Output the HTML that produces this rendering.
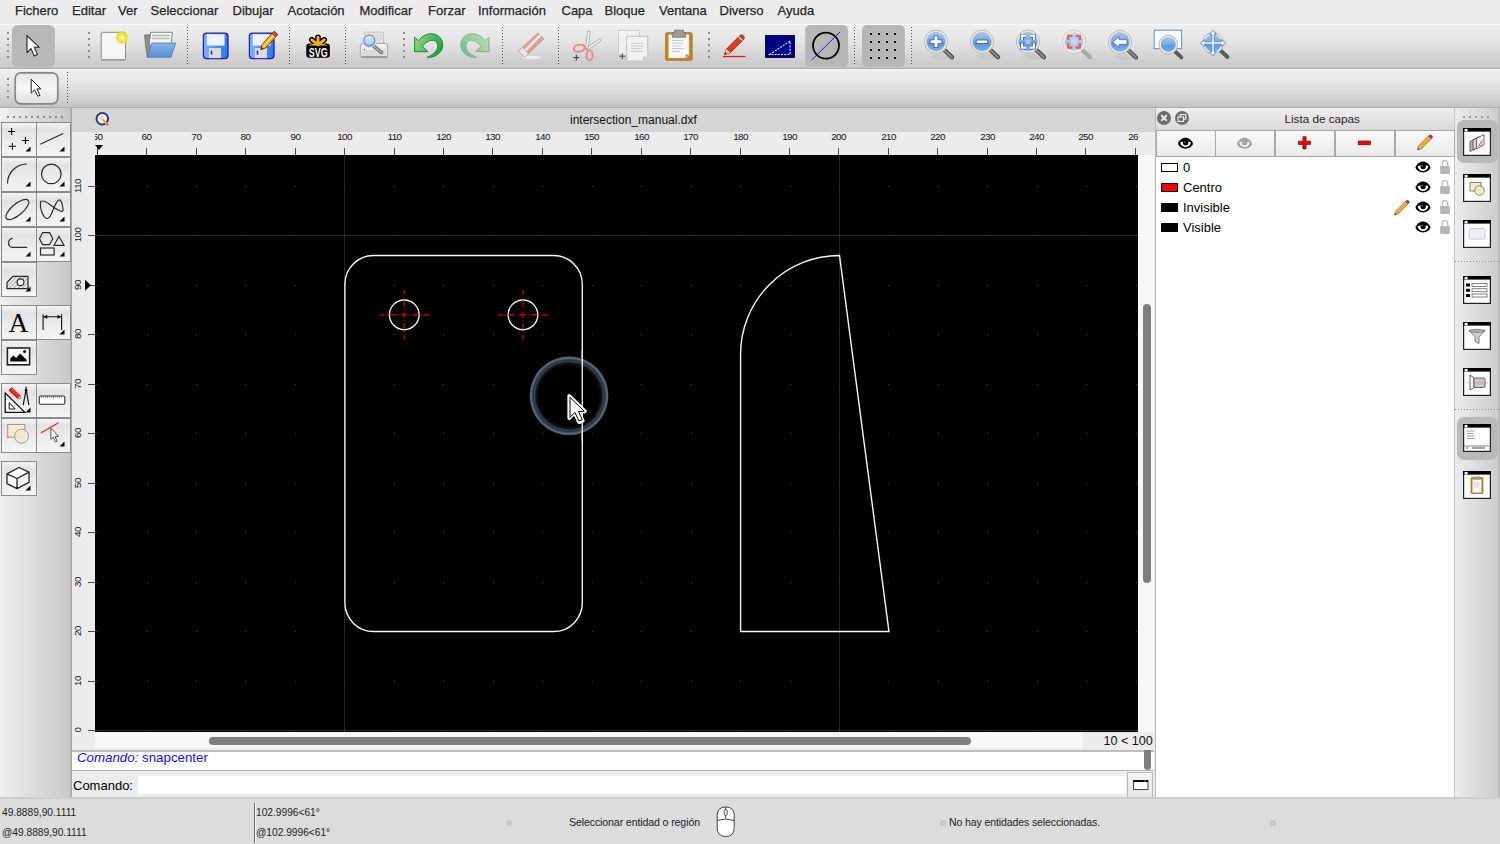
<!DOCTYPE html>
<html><head><meta charset="utf-8">
<style>
*{box-sizing:border-box}
html,body{margin:0;padding:0;width:1500px;height:844px;overflow:hidden;background:#ececec;font-family:"Liberation Sans",sans-serif;position:relative}
.a{position:absolute}
.t{position:absolute;white-space:nowrap;line-height:1}
#menu{left:0;top:0;width:1500px;height:24px;background:#ececec}
#menu .t{top:3.8px;font-size:13px;color:#262626;-webkit-text-stroke:0.25px #262626}
#tb1{left:0;top:24px;width:1500px;height:44.5px;background:linear-gradient(#eeeeee,#e6e6e6 35%,#c7c7c7);border-top:1px solid #fbfbfb;border-bottom:1px solid #a9a9a9}
#tb2{left:0;top:68.5px;width:1500px;height:39px;background:linear-gradient(#eeeeee,#e6e6e6 35%,#c5c5c5);border-top:1px solid #fbfbfb;border-bottom:1.5px solid #a9a9a9}
.grip{position:absolute;width:2px;background:repeating-linear-gradient(#8a8a8a 0 2px,transparent 2px 6px)}
.sep{position:absolute;width:1px;background:repeating-linear-gradient(#6a6a6a 0 1px,transparent 1px 3px)}
#left{left:0;top:108px;width:72px;height:690px;background:linear-gradient(90deg,#f0f0f0,#c8c8c8 97%,#9c9c9c)}
.tbtn{position:absolute;width:35.5px;height:35.3px;background:linear-gradient(#f3f3f3,#e3e3e3 22%,#efefef 70%,#f4f4f4);border:1.5px solid #8c8c8c}
#doctitle{left:72px;top:108px;width:1083px;height:24px;background:#d5d5d5}
#hruler{left:72px;top:132px;width:1083px;height:23px;background:#ececec}
#vruler{left:72px;top:155px;width:23px;height:593px;background:#ececec}
#canvas{left:95px;top:155px;width:1043px;height:577px;background:#000}
#vscroll{left:1138px;top:155px;width:16px;height:577px;background:#f8f8f8}
#hscroll{left:95px;top:732px;width:1059px;height:16px;background:#f8f8f8}
#cmdhist{left:72px;top:750px;width:1082px;height:21px;background:#fff;border-top:2px solid #bdbdbd;border-bottom:1px solid #b8b8b8}
#cmdin{left:72px;top:771px;width:1082px;height:27px;background:#ececec}
.rl{font-size:9.9px;color:#111;letter-spacing:-0.6px}
#status{left:0;top:797px;width:1500px;height:47px;background:#dcdcdc;border-top:2px solid #cdcdcd}
#status .t{font-size:10.2px;color:#222}
#layers{left:1155px;top:108px;width:300px;height:690px;background:#fff;border-left:1px solid #b8b8b8;border-right:1px solid #c4c4c4}
#dock{left:1455px;top:108px;width:45px;height:690px;background:linear-gradient(90deg,#ececec,#cdcdcd 95%,#a8a8a8)}
</style></head><body>

<div id="menu" class="a">
<span class="t" style="left:15px">Fichero</span>
<span class="t" style="left:72px">Editar</span>
<span class="t" style="left:118px">Ver</span>
<span class="t" style="left:150.5px">Seleccionar</span>
<span class="t" style="left:232.5px">Dibujar</span>
<span class="t" style="left:287.5px">Acotación</span>
<span class="t" style="left:359.5px">Modificar</span>
<span class="t" style="left:428px">Forzar</span>
<span class="t" style="left:478px">Información</span>
<span class="t" style="left:561.5px">Capa</span>
<span class="t" style="left:604.5px">Bloque</span>
<span class="t" style="left:659px">Ventana</span>
<span class="t" style="left:719.5px">Diverso</span>
<span class="t" style="left:777.5px">Ayuda</span>
</div>

<div id="tb1" class="a"></div>
<div id="tb2" class="a"></div>
<!--TB-->
<svg class="a" style="left:0;top:0" width="1500" height="108" viewBox="0 0 1500 108">
<defs>
<linearGradient id="lens" x1="0" y1="0" x2="0" y2="1"><stop offset="0" stop-color="#a9c4ea"/><stop offset="0.5" stop-color="#7aa6e0"/><stop offset="0.52" stop-color="#5e92d8"/><stop offset="1" stop-color="#79b0ec"/></linearGradient>
<linearGradient id="lensf" x1="0" y1="0" x2="0" y2="1"><stop offset="0" stop-color="#c8d8ee"/><stop offset="0.5" stop-color="#b0c8ea"/><stop offset="0.52" stop-color="#a4c0e6"/><stop offset="1" stop-color="#b8d4f2"/></linearGradient>
<linearGradient id="disk" x1="0" y1="0" x2="1" y2="0"><stop offset="0" stop-color="#7db4ff"/><stop offset="0.5" stop-color="#4f8ef2"/><stop offset="1" stop-color="#2f78f0"/></linearGradient>
<linearGradient id="undo" x1="0" y1="0" x2="1" y2="0.3"><stop offset="0" stop-color="#9ad67e"/><stop offset="1" stop-color="#2aa548"/></linearGradient>
<linearGradient id="fold" x1="0" y1="0" x2="0" y2="1"><stop offset="0" stop-color="#8ab4e4"/><stop offset="1" stop-color="#5a8fd2"/></linearGradient>
<radialGradient id="glow"><stop offset="0" stop-color="#ffffff"/><stop offset="0.3" stop-color="#f4f070"/><stop offset="0.7" stop-color="#e8e020"/><stop offset="1" stop-color="#e8e020" stop-opacity="0"/></radialGradient>
<g id="mag"><ellipse cx="6" cy="15" rx="11" ry="3" fill="#000" opacity="0.05"/><path d="M8.5,8.5L16,15.5" stroke="#4e4e4e" stroke-width="4.4" stroke-linecap="round"/><path d="M8.5,8.5L16,15.5" stroke="#8a8a8a" stroke-width="2" stroke-linecap="round"/><circle r="11.6" fill="#ecebe4" stroke="#b9b8ae" stroke-width="1"/><circle r="9.4" fill="url(#lens)" stroke="#9fb4cc" stroke-width="0.6"/></g>
<g id="magf"><path d="M8.5,8.5L16,15.5" stroke="#a8a8a8" stroke-width="4.2" stroke-linecap="round"/><circle r="11.6" fill="#efeee8" stroke="#cfcec6" stroke-width="1"/><circle r="9.4" fill="url(#lensf)"/></g>
</defs>
<path d="M8,32V58" stroke="#8c8c8c" stroke-width="2" stroke-dasharray="2 4"/>
<path d="M89,32V58" stroke="#8c8c8c" stroke-width="2" stroke-dasharray="2 4"/>
<path d="M404,32V58" stroke="#8c8c8c" stroke-width="2" stroke-dasharray="2 4"/>
<path d="M709,32V58" stroke="#8c8c8c" stroke-width="2" stroke-dasharray="2 4"/>
<path d="M187.5,27V66" stroke="#555" stroke-width="1" stroke-dasharray="1 2"/>
<path d="M289.5,27V66" stroke="#555" stroke-width="1" stroke-dasharray="1 2"/>
<path d="M345.5,27V66" stroke="#555" stroke-width="1" stroke-dasharray="1 2"/>
<path d="M502.5,27V66" stroke="#555" stroke-width="1" stroke-dasharray="1 2"/>
<path d="M558.5,27V66" stroke="#555" stroke-width="1" stroke-dasharray="1 2"/>
<path d="M854.5,27V66" stroke="#555" stroke-width="1" stroke-dasharray="1 2"/>
<path d="M911.5,27V66" stroke="#555" stroke-width="1" stroke-dasharray="1 2"/>
<rect x="12" y="25" width="43" height="42.5" rx="6" fill="#b8b8b8"/>
<path d="M27,35.6V52.6L31,48.6L34.3,56L37.5,54.6L34.3,47.3H39.3Z" fill="#fff" stroke="#222" stroke-width="1.1" stroke-linejoin="round"/>
<rect x="101.2" y="32.3" width="24.4" height="27.5" rx="1.5" fill="#f6f6f6" stroke="#8a8a8a" stroke-width="1"/><rect x="101.5" y="59" width="24" height="1.5" fill="#9a9a9a"/>
<circle cx="122" cy="37.6" r="7" fill="url(#glow)"/>
<path d="M144.3,35L150.5,34.5L150,57L147,57Z" fill="#8c8c8c" stroke="#6a6a6a" stroke-width="0.6"/><path d="M150.8,32.3H172.4L171,45H149Z" fill="#f4f4f4" stroke="#7a7a7a" stroke-width="0.9"/><path d="M152,35.5h18M152,38.5h18" stroke="#b8b8b8" stroke-width="1.5"/>
<path d="M147.2,57.3L151.8,43H175.7L171,57.3Z" fill="url(#fold)" stroke="#4a7cc0" stroke-width="0.8"/>
<rect x="203.4" y="33.1" width="24.6" height="25.5" rx="3" fill="url(#disk)" stroke="#2424a0" stroke-width="1.3"/><rect x="206.8" y="34.2" width="17.8" height="11.4" fill="#eef2fc"/><rect x="208.8" y="48.1" width="12.2" height="10" fill="#dcdce4"/><rect x="210.70000000000002" y="50.7" width="1.6" height="4" fill="#2233cc"/>
<rect x="249.4" y="33.1" width="24.6" height="25.5" rx="3" fill="url(#disk)" stroke="#2424a0" stroke-width="1.3"/><rect x="252.8" y="34.2" width="17.8" height="11.4" fill="#eef2fc"/><rect x="254.8" y="48.1" width="12.2" height="10" fill="#dcdce4"/><rect x="256.7" y="50.7" width="1.6" height="4" fill="#2233cc"/>
<g transform="translate(268.3,41.3) rotate(-48) scale(0.9)"><path d="M-12.5,0L-7.5,-2.8H9.5V2.8H-7.5Z" fill="#f9b81a" stroke="#8a1a0a" stroke-width="0.9" stroke-linejoin="round"/><path d="M-7.5,-0.2H9.5" stroke="#ffe070" stroke-width="1.2"/><path d="M9.5,-2.8H12.5Q13.5,0 12.5,2.8H9.5Z" fill="#e84040" stroke="#8a1a0a" stroke-width="0.8"/><path d="M-12.5,0L-9.6,-1.6V1.6Z" fill="#333"/></g>
<g><path d="M318,44.5L318,37.2M318,44.5L311.8,39.8M318,44.5L324.2,39.8" stroke="#000" stroke-width="5.6" stroke-linecap="round"/><rect x="306.3" y="43.4" width="23.5" height="14.3" rx="3" fill="#000"/><path d="M318,44.8L318,37.2M318,44.8L311.8,39.8M318,44.8L324.2,39.8" stroke="#f7ac2e" stroke-width="3" stroke-linecap="round"/><path d="M308,45.6Q313,43.2 318,43.5Q323,43.2 328.2,45.6Z" fill="#f7ac2e"/><text x="318.2" y="56.6" text-anchor="middle" font-family="Liberation Sans" font-weight="bold" font-size="12.6" fill="#fff" textLength="18.8" lengthAdjust="spacingAndGlyphs">SVG</text></g>
<rect x="364.3" y="32.2" width="19.2" height="13.5" rx="1" fill="#e4e4e4" stroke="#bdbdbd" stroke-width="0.8"/><path d="M375,36h7M375,38.5h7" stroke="#cfcfcf" stroke-width="1"/><path d="M360.3,46Q360.3,43.4 363,43.4H385Q387.7,43.4 387.7,46V56Q387.7,57.3 386,57.3H362Q360.3,57.3 360.3,56Z" fill="#efefef" stroke="#9a9a9a" stroke-width="0.9"/><path d="M362.5,48.5Q362.5,51 365,51H383Q385.5,51 385.5,48.5" fill="none" stroke="#c0c0c0" stroke-width="0.9"/><rect x="360.8" y="51.5" width="26.5" height="5.3" fill="#dcdcdc"/><rect x="361.5" y="56.2" width="25.5" height="1.6" fill="#8e8e8e"/><circle cx="364.5" cy="49.3" r="0.6" fill="#555"/><path d="M374,46.4L381.4,52.4" stroke="#5a5a5a" stroke-width="3.6" stroke-linecap="round"/><path d="M374,46.4L381.4,52.4" stroke="#a8a8a8" stroke-width="2" stroke-linecap="round"/><circle cx="369.3" cy="40.6" r="7" fill="#f2f2f2" stroke="#c8c8c8" stroke-width="0.6"/><circle cx="369.3" cy="40.6" r="5.5" fill="url(#pplens)" stroke="#4f86cc" stroke-width="1.1"/><defs><linearGradient id="pplens" x1="0" y1="0" x2="0" y2="1"><stop offset="0" stop-color="#e4ecf6"/><stop offset="1" stop-color="#aec4e0"/></linearGradient></defs>
<path d="M414.6,37.3L414.6,51.7L427.8,51.7L422.4,46.3C425,43.5 428.5,40.3 432,40.3C435.8,40.3 437.8,43 437.7,46.5C437.5,51 433,55 427,57.4C435,58 442.8,52.5 442.8,45.2C442.8,38.5 437.5,33.7 431.5,33.7C425.5,33.7 421.5,37 418.5,40.7Z" fill="url(#undo)" stroke="#158a38" stroke-width="1" stroke-linejoin="round"/>
<g transform="translate(903.6,0) scale(-1,1)" opacity="0.5"><path d="M414.6,37.3L414.6,51.7L427.8,51.7L422.4,46.3C425,43.5 428.5,40.3 432,40.3C435.8,40.3 437.8,43 437.7,46.5C437.5,51 433,55 427,57.4C435,58 442.8,52.5 442.8,45.2C442.8,38.5 437.5,33.7 431.5,33.7C425.5,33.7 421.5,37 418.5,40.7Z" fill="url(#undo)" stroke="#158a38" stroke-width="1" stroke-linejoin="round"/></g>
<g opacity="0.75"><ellipse cx="531" cy="57.5" rx="10" ry="1.8" fill="#fff" opacity="0.8"/><path d="M518.4,51.2L537.8,33L543.8,38.9L524.6,57.3Z" fill="#e48a8a" stroke="#c06060" stroke-width="0.7"/><path d="M522.5,55L541,36.2L539.3,34.6L520.7,53.3Z" fill="#f2f2f2"/><path d="M518.4,51.2L522.3,47.6L528.4,53.6L524.6,57.3Z" fill="#f0f0f0" stroke="#999" stroke-width="0.6"/></g>
<g opacity="0.85"><path d="M585.5,49L587.5,31.2L590.2,31.4L588.3,48.5Z" fill="#f4f4f4" stroke="#8a8a8a" stroke-width="0.7"/><path d="M587,47.5L600,38.8L600.8,41L588.5,49.5Z" fill="#f4f4f4" stroke="#8a8a8a" stroke-width="0.7"/><ellipse cx="579.2" cy="48.2" rx="5.5" ry="3.4" transform="rotate(-12 579.2 48.2)" fill="none" stroke="#e88080" stroke-width="2"/><ellipse cx="589.6" cy="55.3" rx="3" ry="5" fill="none" stroke="#e88080" stroke-width="2"/><path d="M584,47.5L588.5,50.5" stroke="#e88080" stroke-width="2"/></g>
<path d="M573.3,57.6h6M576.3,54.6v6" stroke="#333" stroke-width="1"/>
<g opacity="0.9"><path d="M618.5,30.4H639.6V55H618.5Z" fill="#f2f2f2" stroke="#c4c4c4" stroke-width="0.8"/><path d="M626.7,36.3H647.8V56.5L643,61.2H626.7Z" fill="#f4f4f4" stroke="#b4b4b4" stroke-width="0.9"/><path d="M643,61.2V56.5H647.8Z" fill="#d0d0d0"/><path d="M631,43.3h12M631,46h11.5M631,48.6h10M631,51.3h12" stroke="#c0c0c0" stroke-width="0.9"/></g>
<path d="M619.3,56.2h6M622.3,53.2v6" stroke="#444" stroke-width="1"/>
<rect x="665.7" y="32.7" width="26.4" height="27.6" rx="1.3" fill="#c98820" stroke="#9a6414" stroke-width="0.8"/><path d="M668.6,34.5H689V55L686,58H668.6Z" fill="#f8f8f8"/><path d="M685.5,58L689,54.5H685.5Z" fill="#999"/><path d="M672,40.4h11.5M672,43.2h11M672,45.9h9M672,48.6h11.5M672,51.3h8" stroke="#c0c0c0" stroke-width="0.9"/>
<path d="M674.5,30.2H683.5V32.5H685.6V37.3H672.3V32.5H674.5Z" fill="#9c9c94" stroke="#6a6a64" stroke-width="0.7"/>
<path d="M723,56.5H745.5" stroke="#ee1010" stroke-width="1.3"/><path d="M724.5,54.5L726.5,49L738,37.5L741.8,41.3L730.3,52.8Z" fill="#e83a1a" stroke="#6a2a10" stroke-width="0.8" stroke-linejoin="round"/><path d="M738,37.5L739.5,36L743.3,39.8L741.8,41.3Z" fill="#d8d8d8" stroke="#6a2a10" stroke-width="0.6"/><path d="M739.5,36L740.5,35Q742,34 743.8,36Q745,37.8 744,39L743.3,39.8Z" fill="#e83a1a" stroke="#6a2a10" stroke-width="0.6"/><path d="M724.5,54.5L726.5,49L730.3,52.8Z" fill="#f0c8a0"/><path d="M724.5,54.5L725.3,52.2L726.8,53.7Z" fill="#222"/>
<rect x="765.5" y="35.5" width="29" height="22" fill="#000084" stroke="#101030" stroke-width="1"/><path d="M769.5,54.5L790,41.2V54.5Z" fill="none" stroke="#e8e8f8" stroke-width="1.1" stroke-dasharray="2 1.2"/>
<rect x="805.2" y="25" width="42.8" height="42" rx="5" fill="#b6b6b6"/><circle cx="826" cy="45.6" r="13" fill="none" stroke="#000" stroke-width="1.8"/><path d="M812,59.7L840,32" stroke="#1a1af0" stroke-width="1"/>
<rect x="862" y="25" width="42.8" height="42" rx="5" fill="#b6b6b6"/>
<path d="M870,33h2v2h-2zM870,41h2v2h-2zM870,49h2v2h-2zM870,57h2v2h-2zM878,33h2v2h-2zM878,41h2v2h-2zM878,49h2v2h-2zM878,57h2v2h-2zM886,33h2v2h-2zM886,41h2v2h-2zM886,49h2v2h-2zM886,57h2v2h-2zM894,33h2v2h-2zM894,41h2v2h-2zM894,49h2v2h-2zM894,57h2v2h-2z" fill="#000"/>
<g transform="translate(936,41.7)"><use href="#mag"/><path d="M-1.9,-5.8H1.9V-1.9H5.8V1.9H1.9V5.8H-1.9V1.9H-5.8V-1.9H-1.9Z" fill="#fff" stroke="#2455a4" stroke-width="0.8"/></g>
<g transform="translate(982,41.7)"><use href="#mag"/><rect x="-5.8" y="-1.7" width="11.6" height="3.4" fill="#fff" stroke="#2455a4" stroke-width="0.8"/></g>
<g transform="translate(1028,41.7)"><use href="#mag"/><rect x="-2.6" y="-2.2" width="5.2" height="4.4" fill="#a8c4ea"/><path d="M-6,-1.8V-6H-1.8M1.8,-6H6V-1.8M6,1.8V6H1.8M-1.8,6H-6V1.8" fill="none" stroke="#2a5aa8" stroke-width="3.6"/><path d="M-6,-1.8V-6H-1.8M1.8,-6H6V-1.8M6,1.8V6H1.8M-1.8,6H-6V1.8" fill="none" stroke="#fff" stroke-width="2.2"/></g>
<g transform="translate(1074,41.7)"><use href="#magf"/><path d="M-5.8,-1.5V-5.8H-1.5M1.5,-5.8H5.8V-1.5M5.8,1.5V5.8H1.5M-1.5,5.8H-5.8V1.5" fill="none" stroke="#f06060" stroke-width="2.4"/><rect x="-3" y="-2.5" width="6" height="5" fill="#c8daf0" opacity="0.8"/></g>
<g transform="translate(1120,42)"><use href="#mag"/><path d="M-7.3,0L-0.8,-5.4V-2.3H7V2.3H-0.8V5.4Z" fill="#fff" stroke="#2a5aa8" stroke-width="0.7" stroke-linejoin="round"/></g>
<rect x="1154.2" y="30.2" width="27.4" height="18.4" fill="#fafcff" stroke="#6a98d8" stroke-width="1.1"/>
<g transform="translate(1168.3,44.6)"><path d="M6.5,6.5L13,12.8" stroke="#5c5c5c" stroke-width="4" stroke-linecap="round"/><circle r="9.3" fill="#ecebe4" stroke="#b9b8ae" stroke-width="1"/><circle r="7.4" fill="url(#lens)"/></g>
<g transform="translate(1213,43)"><path d="M7.5,7.5L14.5,14" stroke="#5c5c5c" stroke-width="4" stroke-linecap="round"/><circle r="10.5" fill="#ecebe4" stroke="#b9b8ae" stroke-width="1"/><circle r="8.6" fill="url(#lens)"/><path d="M0,-12.8L3.4,-8.4H1.2V-1.2H8.4V-3.4L12.8,0L8.4,3.4V1.2H1.2V8.4H3.4L0,12.8L-3.4,8.4H-1.2V1.2H-8.4V3.4L-12.8,0L-8.4,-3.4V-1.2H-1.2V-8.4H-3.4Z" fill="#fff" stroke="#3a78d0" stroke-width="0.8" stroke-linejoin="round"/></g>
<path d="M8,78V98" stroke="#8c8c8c" stroke-width="2" stroke-dasharray="2 4"/>
<rect x="15.2" y="72.9" width="42.6" height="30.9" rx="5.5" fill="url(#tb2btn)" stroke="#888" stroke-width="1.7"/>
<defs><linearGradient id="tb2btn" x1="0" y1="0" x2="0" y2="1"><stop offset="0" stop-color="#e8e8e8"/><stop offset="0.5" stop-color="#f6f6f6"/><stop offset="1" stop-color="#dedede"/></linearGradient></defs>
<path d="M31.2,79.2V93.2L34.5,89.9L37.8,96.3L40,95.3L36.9,88.9H40.8Z" fill="#fff" stroke="#222" stroke-width="1" stroke-linejoin="round"/>
<path d="M67.5,72V105" stroke="#555" stroke-width="1" stroke-dasharray="1 2"/>
</svg>
<!--/TB-->
<div id="left" class="a">
<div class="a" style="left:7px;top:8px;width:58px;height:2px;background:repeating-linear-gradient(90deg,#8c8c8c 0 2px,transparent 2px 6px)"></div>
<div class="tbtn" style="left:1px;top:14px"><svg class="a" style="left:-1.5px;top:-1.5px" width="36" height="36"><g stroke="#000" stroke-width="1"><path d="M7.1,9.5h7M10.6,6v7M20.9,18.5h7M24.4,15v7M7.9,24.3h7M11.4,20.8v7"/></g><path d="M29.5,24.5V29.5H24.5Z" fill="#000"/></svg></div>
<div class="tbtn" style="left:35.5px;top:14px"><svg class="a" style="left:-1.5px;top:-1.5px" width="36" height="36"><path d="M5.2,22.3L28.2,11.5" fill="none" stroke="#2b2b2b" stroke-width="1.2"/><path d="M29.5,24.5V29.5H24.5Z" fill="#000"/></svg></div>
<div class="tbtn" style="left:1px;top:49px"><svg class="a" style="left:-1.5px;top:-1.5px" width="36" height="36"><path d="M6.5,26.4A19.5,19.5 0 0 1 25.8,7" fill="none" stroke="#2b2b2b" stroke-width="1.2"/><path d="M29.5,24.5V29.5H24.5Z" fill="#000"/></svg></div>
<div class="tbtn" style="left:35.5px;top:49px"><svg class="a" style="left:-1.5px;top:-1.5px" width="36" height="36"><circle cx="16.3" cy="16.9" r="9.8" fill="none" stroke="#2b2b2b" stroke-width="1.2"/><path d="M29.5,24.5V29.5H24.5Z" fill="#000"/></svg></div>
<div class="tbtn" style="left:1px;top:84px"><svg class="a" style="left:-1.5px;top:-1.5px" width="36" height="36"><ellipse cx="16.3" cy="17.5" rx="14.2" ry="5.6" transform="rotate(-40 16.3 17.5)" fill="none" stroke="#2b2b2b" stroke-width="1.2"/><path d="M29.5,24.5V29.5H24.5Z" fill="#000"/></svg></div>
<div class="tbtn" style="left:35.5px;top:84px"><svg class="a" style="left:-1.5px;top:-1.5px" width="36" height="36"><path d="M5.5,9.5C4.5,16 8,26 12,26.5C15.5,27 17.5,19 19,15.5C21,11 23,7.5 24.5,7.8C27,8.3 28.5,17.5 27.8,19C27,20.5 22,17.5 19,15.5C15,13 9.5,7 5.5,9.5Z" fill="none" stroke="#2b2b2b" stroke-width="1.2"/><path d="M29.5,24.5V29.5H24.5Z" fill="#000"/></svg></div>
<div class="tbtn" style="left:1px;top:119px"><svg class="a" style="left:-1.5px;top:-1.5px" width="36" height="36"><path d="M11.8,11.3A4.6,4.6 0 0 0 11.3,20.4H26.2" fill="none" stroke="#2b2b2b" stroke-width="1.2"/><path d="M29.5,24.5V29.5H24.5Z" fill="#000"/></svg></div>
<div class="tbtn" style="left:35.5px;top:119px"><svg class="a" style="left:-1.5px;top:-1.5px" width="36" height="36"><path d="M4.5,11.8L7.6,5.6H14.6L17.8,11.8L14.6,17.6H7.6Z M19,18.3H29L24,9.5Z" fill="none" stroke="#2b2b2b" stroke-width="1.2"/><rect x="5.5" y="21" width="13.6" height="7" fill="none" stroke="#2b2b2b" stroke-width="1.2"/><path d="M29.5,24.5V29.5H24.5Z" fill="#000"/></svg></div>
<div class="tbtn" style="left:1px;top:154px"><svg class="a" style="left:-1.5px;top:-1.5px" width="36" height="36"><defs><pattern id="hp" width="3" height="3" patternUnits="userSpaceOnUse" patternTransform="rotate(45)"><line x1="0" y1="0" x2="0" y2="3" stroke="#555" stroke-width="0.9"/></pattern></defs><path d="M6,20.5L11.8,14.3H27V26.6H6Z" fill="url(#hp)" stroke="#2b2b2b" stroke-width="1.2"/><circle cx="19.5" cy="20.3" r="3.4" fill="#f4f4f4" stroke="#2b2b2b" stroke-width="1.1"/><path d="M29.5,24.5V29.5H24.5Z" fill="#000"/></svg></div>
<div class="tbtn" style="left:1px;top:197px"><svg class="a" style="left:-1.5px;top:-1.5px" width="36" height="36"><text x="17.5" y="27" text-anchor="middle" font-family="Liberation Serif" font-size="27.5" fill="#000">A</text></svg></div>
<div class="tbtn" style="left:35.5px;top:197px"><svg class="a" style="left:-1.5px;top:-1.5px" width="36" height="36"><g stroke="#111" stroke-width="1.1" fill="none"><path d="M8.1,9.2V25M26.6,9.2V25M8.6,11.8H26.1"/></g><path d="M8.6,11.8l3.6,-2.1v4.2zM26.1,11.8l-3.6,-2.1v4.2z" fill="#111"/><path d="M29.5,24.5V29.5H24.5Z" fill="#000"/></svg></div>
<div class="tbtn" style="left:1px;top:231.5px"><svg class="a" style="left:-1.5px;top:-1.5px" width="36" height="36"><rect x="6.4" y="9" width="22.2" height="16.8" fill="#fff" stroke="#222" stroke-width="1.6"/><path d="M9.3,22.6V19.6L12.3,16.4L15.2,19L19.2,14.6L25.6,20.8V22.6Z" fill="#000"/><circle cx="23.6" cy="12.6" r="1.5" fill="#000"/></svg></div>
<div class="tbtn" style="left:1px;top:275px"><svg class="a" style="left:-1.5px;top:-1.5px" width="36" height="36"><path d="M4.2,29.3H23.8L4.2,10Z" fill="#fff" stroke="#111" stroke-width="1.3" stroke-linejoin="miter"/><path d="M8.2,26H14.2L8.2,19.6Z" fill="none" stroke="#111" stroke-width="1"/><g transform="translate(14.2,10.6) rotate(43)"><path d="M-6.5,-2H5L7.5,0L5,2H-6.5Q-7.5,0 -6.5,-2Z" fill="#e02222" stroke="#8a1010" stroke-width="0.6"/><path d="M5,-2L7.5,0L5,2Z" fill="#f0c090"/><path d="M-6,-1.2H4" stroke="#ff8080" stroke-width="0.6"/></g><path d="M25.1,3.8V6.5M25.1,6.5L22.2,22.2M25.1,6.5L27.9,22.2" fill="none" stroke="#111" stroke-width="1.2"/><circle cx="25.1" cy="7.5" r="1.4" fill="#111"/><path d="M29.5,24.5V29.5H24.5Z" fill="#000"/></svg></div>
<div class="tbtn" style="left:35.5px;top:275px"><svg class="a" style="left:-1.5px;top:-1.5px" width="36" height="36"><rect x="4.3" y="13" width="25.5" height="8.3" rx="1.2" fill="#fff" stroke="#333" stroke-width="1.1"/><path d="M6.5,13v2M8.5,13v1.5M10.5,13v1.5M12.5,13v2M14.5,13v1.5M16.5,13v1.5M18.5,13v2.5M20.5,13v1.5M22.5,13v1.5M24.5,13v2M26.5,13v1.5" stroke="#444" stroke-width="0.7"/></svg></div>
<div class="tbtn" style="left:1px;top:309.5px"><svg class="a" style="left:-1.5px;top:-1.5px" width="36" height="36"><rect x="6.7" y="7.5" width="17.1" height="12.6" fill="#f2ecd4" stroke="#9c9a8c" stroke-width="1"/><circle cx="20.6" cy="19.2" r="7" fill="#f2ecd4" fill-opacity="0.85" stroke="#9c9a8c" stroke-width="1"/><circle cx="6.7" cy="20.1" r="1.3" fill="#ff8888"/></svg></div>
<div class="tbtn" style="left:35.5px;top:309.5px"><svg class="a" style="left:-1.5px;top:-1.5px" width="36" height="36"><path d="M5.9,16L23.5,5.7" stroke="#ee2222" stroke-width="1.3"/><path d="M15.9,11.1V22.4L18.3,20.2L20.4,25L22.1,24.3L20.1,19.5H23.6Z" fill="#fff" stroke="#444" stroke-width="0.9" stroke-linejoin="round"/><path d="M29.5,24.5V29.5H24.5Z" fill="#000"/></svg></div>
<div class="tbtn" style="left:1px;top:353px"><svg class="a" style="left:-1.5px;top:-1.5px" width="36" height="36"><path d="M6,12.8L18,6.5L28,11.2L16,17.5Z M6,12.8V22.6L16,27.6V17.5M28,11.2V21.4L16,27.6" fill="#fff" stroke="#222" stroke-width="1.3" stroke-linejoin="round"/><path d="M29.5,24.5V29.5H24.5Z" fill="#000"/></svg></div>
</div>
<div id="doctitle" class="a"><svg class="a" style="left:23px;top:3px" width="16" height="16"><circle cx="7.3" cy="7.8" r="5.8" fill="#f4f4f4" stroke="#283c8c" stroke-width="2"/><path d="M4,6L7,9M6,5L9,8" stroke="#e07070" stroke-width="0.6"/><path d="M7.5,8.5L12,13" stroke="#f0b020" stroke-width="2.2"/><circle cx="12.6" cy="13.6" r="1.1" fill="#e05050"/></svg><span class="t" style="left:498px;top:6px;font-size:12px;color:#111">intersection_manual.dxf</span></div>
<div id="hruler" class="a">
<div class="a" style="left:23px;top:0;width:1043px;height:23px;overflow:hidden">
<svg class="a" style="left:0;top:0" width="1043" height="23"><g stroke="#4a4a4a" stroke-width="1">
<line x1="2.5" y1="16" x2="2.5" y2="23"/>
<line x1="51.5" y1="16" x2="51.5" y2="23"/>
<line x1="101.5" y1="16" x2="101.5" y2="23"/>
<line x1="150.5" y1="16" x2="150.5" y2="23"/>
<line x1="200.5" y1="16" x2="200.5" y2="23"/>
<line x1="249.5" y1="16" x2="249.5" y2="23"/>
<line x1="299.5" y1="16" x2="299.5" y2="23"/>
<line x1="348.5" y1="16" x2="348.5" y2="23"/>
<line x1="397.5" y1="16" x2="397.5" y2="23"/>
<line x1="447.5" y1="16" x2="447.5" y2="23"/>
<line x1="496.5" y1="16" x2="496.5" y2="23"/>
<line x1="546.5" y1="16" x2="546.5" y2="23"/>
<line x1="595.5" y1="16" x2="595.5" y2="23"/>
<line x1="645.5" y1="16" x2="645.5" y2="23"/>
<line x1="694.5" y1="16" x2="694.5" y2="23"/>
<line x1="743.5" y1="16" x2="743.5" y2="23"/>
<line x1="793.5" y1="16" x2="793.5" y2="23"/>
<line x1="842.5" y1="16" x2="842.5" y2="23"/>
<line x1="892.5" y1="16" x2="892.5" y2="23"/>
<line x1="941.5" y1="16" x2="941.5" y2="23"/>
<line x1="990.5" y1="16" x2="990.5" y2="23"/>
<line x1="1040.5" y1="16" x2="1040.5" y2="23"/>
</g></svg>
<span class="t rl" style="left:-17.5px;top:0.1px;width:40px;text-align:center">50</span>
<span class="t rl" style="left:31.5px;top:0.1px;width:40px;text-align:center">60</span>
<span class="t rl" style="left:81.5px;top:0.1px;width:40px;text-align:center">70</span>
<span class="t rl" style="left:130.5px;top:0.1px;width:40px;text-align:center">80</span>
<span class="t rl" style="left:180.5px;top:0.1px;width:40px;text-align:center">90</span>
<span class="t rl" style="left:229.5px;top:0.1px;width:40px;text-align:center">100</span>
<span class="t rl" style="left:279.5px;top:0.1px;width:40px;text-align:center">110</span>
<span class="t rl" style="left:328.5px;top:0.1px;width:40px;text-align:center">120</span>
<span class="t rl" style="left:377.5px;top:0.1px;width:40px;text-align:center">130</span>
<span class="t rl" style="left:427.5px;top:0.1px;width:40px;text-align:center">140</span>
<span class="t rl" style="left:476.5px;top:0.1px;width:40px;text-align:center">150</span>
<span class="t rl" style="left:526.5px;top:0.1px;width:40px;text-align:center">160</span>
<span class="t rl" style="left:575.5px;top:0.1px;width:40px;text-align:center">170</span>
<span class="t rl" style="left:625.5px;top:0.1px;width:40px;text-align:center">180</span>
<span class="t rl" style="left:674.5px;top:0.1px;width:40px;text-align:center">190</span>
<span class="t rl" style="left:723.5px;top:0.1px;width:40px;text-align:center">200</span>
<span class="t rl" style="left:773.5px;top:0.1px;width:40px;text-align:center">210</span>
<span class="t rl" style="left:822.5px;top:0.1px;width:40px;text-align:center">220</span>
<span class="t rl" style="left:872.5px;top:0.1px;width:40px;text-align:center">230</span>
<span class="t rl" style="left:921.5px;top:0.1px;width:40px;text-align:center">240</span>
<span class="t rl" style="left:970.5px;top:0.1px;width:40px;text-align:center">250</span>
<span class="t rl" style="left:1020.5px;top:0.1px;width:40px;text-align:center">260</span>
<svg class="a" style="left:0;top:13px" width="10" height="10"><path d="M0,0H8L4,5Z" fill="#000"/><line x1="2.5" y1="4" x2="2.5" y2="10" stroke="#333"/></svg>
</div>
</div>
<div id="vruler" class="a">
<svg class="a" style="left:0;top:0" width="23" height="593"><g stroke="#4a4a4a" stroke-width="1">
<line x1="16" y1="575.5" x2="23" y2="575.5"/>
<line x1="16" y1="526.5" x2="23" y2="526.5"/>
<line x1="16" y1="476.5" x2="23" y2="476.5"/>
<line x1="16" y1="427.5" x2="23" y2="427.5"/>
<line x1="16" y1="377.5" x2="23" y2="377.5"/>
<line x1="16" y1="328.5" x2="23" y2="328.5"/>
<line x1="16" y1="278.5" x2="23" y2="278.5"/>
<line x1="16" y1="229.5" x2="23" y2="229.5"/>
<line x1="16" y1="179.5" x2="23" y2="179.5"/>
<line x1="16" y1="130.5" x2="23" y2="130.5"/>
<line x1="16" y1="80.5" x2="23" y2="80.5"/>
<line x1="16" y1="31.5" x2="23" y2="31.5"/>
</g>
<path d="M13,124.7L19,130.2L13,135.7Z" fill="#000"/>
</svg>
<span class="t rl" style="left:-14px;top:570.0px;width:40px;height:10px;text-align:center;transform:rotate(-90deg)">0</span>
<span class="t rl" style="left:-14px;top:520.5px;width:40px;height:10px;text-align:center;transform:rotate(-90deg)">10</span>
<span class="t rl" style="left:-14px;top:471.0px;width:40px;height:10px;text-align:center;transform:rotate(-90deg)">20</span>
<span class="t rl" style="left:-14px;top:421.6px;width:40px;height:10px;text-align:center;transform:rotate(-90deg)">30</span>
<span class="t rl" style="left:-14px;top:372.1px;width:40px;height:10px;text-align:center;transform:rotate(-90deg)">40</span>
<span class="t rl" style="left:-14px;top:322.6px;width:40px;height:10px;text-align:center;transform:rotate(-90deg)">50</span>
<span class="t rl" style="left:-14px;top:273.1px;width:40px;height:10px;text-align:center;transform:rotate(-90deg)">60</span>
<span class="t rl" style="left:-14px;top:223.6px;width:40px;height:10px;text-align:center;transform:rotate(-90deg)">70</span>
<span class="t rl" style="left:-14px;top:174.2px;width:40px;height:10px;text-align:center;transform:rotate(-90deg)">80</span>
<span class="t rl" style="left:-14px;top:124.7px;width:40px;height:10px;text-align:center;transform:rotate(-90deg)">90</span>
<span class="t rl" style="left:-14px;top:75.2px;width:40px;height:10px;text-align:center;transform:rotate(-90deg)">100</span>
<span class="t rl" style="left:-14px;top:25.7px;width:40px;height:10px;text-align:center;transform:rotate(-90deg)">110</span>
</div>
<div id="canvas" class="a">
<!--CANVAS-->
<svg class="a" style="left:0;top:0" width="1043" height="577" viewBox="0 0 1043 577">
<g stroke="#282828" stroke-width="1">
<line x1="249.5" y1="0" x2="249.5" y2="577"/>
<line x1="744.5" y1="0" x2="744.5" y2="577"/>
<line x1="0" y1="575.5" x2="1043" y2="575.5"/>
<line x1="0" y1="80.5" x2="1043" y2="80.5"/>
</g>
<path fill="#3e3e3e" d="M2,575h1v1h-1zM2,526h1v1h-1zM2,476h1v1h-1zM2,427h1v1h-1zM2,377h1v1h-1zM2,328h1v1h-1zM2,278h1v1h-1zM2,229h1v1h-1zM2,179h1v1h-1zM2,130h1v1h-1zM2,80h1v1h-1zM2,31h1v1h-1zM52,575h1v1h-1zM52,526h1v1h-1zM52,476h1v1h-1zM52,427h1v1h-1zM52,377h1v1h-1zM52,328h1v1h-1zM52,278h1v1h-1zM52,229h1v1h-1zM52,179h1v1h-1zM52,130h1v1h-1zM52,80h1v1h-1zM52,31h1v1h-1zM101,575h1v1h-1zM101,526h1v1h-1zM101,476h1v1h-1zM101,427h1v1h-1zM101,377h1v1h-1zM101,328h1v1h-1zM101,278h1v1h-1zM101,229h1v1h-1zM101,179h1v1h-1zM101,130h1v1h-1zM101,80h1v1h-1zM101,31h1v1h-1zM150,575h1v1h-1zM150,526h1v1h-1zM150,476h1v1h-1zM150,427h1v1h-1zM150,377h1v1h-1zM150,328h1v1h-1zM150,278h1v1h-1zM150,229h1v1h-1zM150,179h1v1h-1zM150,130h1v1h-1zM150,80h1v1h-1zM150,31h1v1h-1zM200,575h1v1h-1zM200,526h1v1h-1zM200,476h1v1h-1zM200,427h1v1h-1zM200,377h1v1h-1zM200,328h1v1h-1zM200,278h1v1h-1zM200,229h1v1h-1zM200,179h1v1h-1zM200,130h1v1h-1zM200,80h1v1h-1zM200,31h1v1h-1zM249,575h1v1h-1zM249,526h1v1h-1zM249,476h1v1h-1zM249,427h1v1h-1zM249,377h1v1h-1zM249,328h1v1h-1zM249,278h1v1h-1zM249,229h1v1h-1zM249,179h1v1h-1zM249,130h1v1h-1zM249,80h1v1h-1zM249,31h1v1h-1zM299,575h1v1h-1zM299,526h1v1h-1zM299,476h1v1h-1zM299,427h1v1h-1zM299,377h1v1h-1zM299,328h1v1h-1zM299,278h1v1h-1zM299,229h1v1h-1zM299,179h1v1h-1zM299,130h1v1h-1zM299,80h1v1h-1zM299,31h1v1h-1zM348,575h1v1h-1zM348,526h1v1h-1zM348,476h1v1h-1zM348,427h1v1h-1zM348,377h1v1h-1zM348,328h1v1h-1zM348,278h1v1h-1zM348,229h1v1h-1zM348,179h1v1h-1zM348,130h1v1h-1zM348,80h1v1h-1zM348,31h1v1h-1zM398,575h1v1h-1zM398,526h1v1h-1zM398,476h1v1h-1zM398,427h1v1h-1zM398,377h1v1h-1zM398,328h1v1h-1zM398,278h1v1h-1zM398,229h1v1h-1zM398,179h1v1h-1zM398,130h1v1h-1zM398,80h1v1h-1zM398,31h1v1h-1zM447,575h1v1h-1zM447,526h1v1h-1zM447,476h1v1h-1zM447,427h1v1h-1zM447,377h1v1h-1zM447,328h1v1h-1zM447,278h1v1h-1zM447,229h1v1h-1zM447,179h1v1h-1zM447,130h1v1h-1zM447,80h1v1h-1zM447,31h1v1h-1zM497,575h1v1h-1zM497,526h1v1h-1zM497,476h1v1h-1zM497,427h1v1h-1zM497,377h1v1h-1zM497,328h1v1h-1zM497,278h1v1h-1zM497,229h1v1h-1zM497,179h1v1h-1zM497,130h1v1h-1zM497,80h1v1h-1zM497,31h1v1h-1zM546,575h1v1h-1zM546,526h1v1h-1zM546,476h1v1h-1zM546,427h1v1h-1zM546,377h1v1h-1zM546,328h1v1h-1zM546,278h1v1h-1zM546,229h1v1h-1zM546,179h1v1h-1zM546,130h1v1h-1zM546,80h1v1h-1zM546,31h1v1h-1zM596,575h1v1h-1zM596,526h1v1h-1zM596,476h1v1h-1zM596,427h1v1h-1zM596,377h1v1h-1zM596,328h1v1h-1zM596,278h1v1h-1zM596,229h1v1h-1zM596,179h1v1h-1zM596,130h1v1h-1zM596,80h1v1h-1zM596,31h1v1h-1zM645,575h1v1h-1zM645,526h1v1h-1zM645,476h1v1h-1zM645,427h1v1h-1zM645,377h1v1h-1zM645,328h1v1h-1zM645,278h1v1h-1zM645,229h1v1h-1zM645,179h1v1h-1zM645,130h1v1h-1zM645,80h1v1h-1zM645,31h1v1h-1zM695,575h1v1h-1zM695,526h1v1h-1zM695,476h1v1h-1zM695,427h1v1h-1zM695,377h1v1h-1zM695,328h1v1h-1zM695,278h1v1h-1zM695,229h1v1h-1zM695,179h1v1h-1zM695,130h1v1h-1zM695,80h1v1h-1zM695,31h1v1h-1zM744,575h1v1h-1zM744,526h1v1h-1zM744,476h1v1h-1zM744,427h1v1h-1zM744,377h1v1h-1zM744,328h1v1h-1zM744,278h1v1h-1zM744,229h1v1h-1zM744,179h1v1h-1zM744,130h1v1h-1zM744,80h1v1h-1zM744,31h1v1h-1zM793,575h1v1h-1zM793,526h1v1h-1zM793,476h1v1h-1zM793,427h1v1h-1zM793,377h1v1h-1zM793,328h1v1h-1zM793,278h1v1h-1zM793,229h1v1h-1zM793,179h1v1h-1zM793,130h1v1h-1zM793,80h1v1h-1zM793,31h1v1h-1zM843,575h1v1h-1zM843,526h1v1h-1zM843,476h1v1h-1zM843,427h1v1h-1zM843,377h1v1h-1zM843,328h1v1h-1zM843,278h1v1h-1zM843,229h1v1h-1zM843,179h1v1h-1zM843,130h1v1h-1zM843,80h1v1h-1zM843,31h1v1h-1zM892,575h1v1h-1zM892,526h1v1h-1zM892,476h1v1h-1zM892,427h1v1h-1zM892,377h1v1h-1zM892,328h1v1h-1zM892,278h1v1h-1zM892,229h1v1h-1zM892,179h1v1h-1zM892,130h1v1h-1zM892,80h1v1h-1zM892,31h1v1h-1zM942,575h1v1h-1zM942,526h1v1h-1zM942,476h1v1h-1zM942,427h1v1h-1zM942,377h1v1h-1zM942,328h1v1h-1zM942,278h1v1h-1zM942,229h1v1h-1zM942,179h1v1h-1zM942,130h1v1h-1zM942,80h1v1h-1zM942,31h1v1h-1zM991,575h1v1h-1zM991,526h1v1h-1zM991,476h1v1h-1zM991,427h1v1h-1zM991,377h1v1h-1zM991,328h1v1h-1zM991,278h1v1h-1zM991,229h1v1h-1zM991,179h1v1h-1zM991,130h1v1h-1zM991,80h1v1h-1zM991,31h1v1h-1zM1041,575h1v1h-1zM1041,526h1v1h-1zM1041,476h1v1h-1zM1041,427h1v1h-1zM1041,377h1v1h-1zM1041,328h1v1h-1zM1041,278h1v1h-1zM1041,229h1v1h-1zM1041,179h1v1h-1zM1041,130h1v1h-1zM1041,80h1v1h-1zM1041,31h1v1h-1z"/>
<rect x="249.90" y="100.49" width="237.41" height="376.05" rx="28.69" fill="none" stroke="#f4f4f4" stroke-width="1.4"/>
<circle cx="309.25" cy="159.87" r="14.84" fill="none" stroke="#f4f4f4" stroke-width="1.4"/>
<g stroke="#a80000" stroke-width="1.6" stroke-dasharray="6 2.4 0.8 2.15" stroke-dashoffset="1.05"><line x1="284.52" y1="159.87" x2="333.98" y2="159.87"/><line x1="309.25" y1="135.14" x2="309.25" y2="184.60"/></g>
<circle cx="427.96" cy="159.87" r="14.84" fill="none" stroke="#f4f4f4" stroke-width="1.4"/>
<g stroke="#a80000" stroke-width="1.6" stroke-dasharray="6 2.4 0.8 2.15" stroke-dashoffset="1.05"><line x1="403.23" y1="159.87" x2="452.69" y2="159.87"/><line x1="427.96" y1="135.14" x2="427.96" y2="184.60"/></g>
<path d="M645.58,476.54L645.58,199.45A98.92,98.92 0 0 1 744.50,100.49L793.96,476.54Z" fill="none" stroke="#f4f4f4" stroke-width="1.4"/>
<defs><radialGradient id="rg" cx="0.5" cy="0.5" r="0.5"><stop offset="0.77" stop-color="#000"/><stop offset="0.84" stop-color="#141a20"/><stop offset="0.875" stop-color="#36424c"/><stop offset="0.905" stop-color="#26303a"/><stop offset="0.94" stop-color="#4a5a68"/><stop offset="0.975" stop-color="#566a7a"/><stop offset="1" stop-color="#303a44"/></radialGradient></defs>
<circle cx="474" cy="240.8" r="39.5" fill="url(#rg)"/>
<line x1="487.31" y1="195.8" x2="487.31" y2="285.8" stroke="#e8e8e8" stroke-width="1.4"/>
<g transform="translate(474.20000000000005,240.89999999999998)"><path d="M0,0 L0,22.3 L5.4,16.8 L9.9,26.3 L13.6,24.9 L9.5,15.8 L15.8,15.5 Z" fill="#fff" stroke="#fff" stroke-width="3.6" stroke-linejoin="round"/><path d="M0,0 L0,22.3 L5.4,16.8 L9.9,26.3 L13.6,24.9 L9.5,15.8 L15.8,15.5 Z" fill="#fff" stroke="#000" stroke-width="1.1" stroke-linejoin="round" transform="translate(0.8,1.4) scale(0.9)"/></g>
</svg>
<!--/CANVAS-->
</div>
<div id="vscroll" class="a"><div class="a" style="left:5px;top:149px;width:8px;height:279px;border-radius:4px;background:#7f7f7f"></div></div>
<div id="hscroll" class="a"><div class="a" style="left:113.5px;top:5px;width:762px;height:8px;border-radius:4px;background:#7f7f7f"></div><div class="a" style="left:987.5px;top:-0.5px;width:71.5px;height:16.5px;background:#ececec"></div><span class="t" style="left:1008.5px;top:2.5px;font-size:12.6px;color:#111">10 &lt; 100</span></div>
<div id="cmdhist" class="a"><span class="t" style="left:5px;top:-0.8px;font-size:13.3px;color:#1010e8"><i>Comando:</i> snapcenter</span><div class="a" style="left:1071.5px;top:-2px;width:7.5px;height:20px;border-radius:0 0 3.7px 3.7px;background:#7f7f7f"></div></div>
<div id="cmdin" class="a"><span class="t" style="left:1px;top:7.5px;font-size:13px;color:#000">Comando:</span><div class="a" style="left:66px;top:5px;width:988px;height:18px;background:#fff"></div><div class="a" style="left:1055px;top:0.5px;width:26px;height:26px;background:linear-gradient(#f4f4f4,#e6e6e6);border:1px solid #b8b8b8"><svg class="a" style="left:4.5px;top:6px" width="18" height="12"><rect x="0.5" y="1.5" width="14.5" height="9" fill="#fff" stroke="#333" stroke-width="0.9"/><rect x="0.5" y="1.2" width="14.5" height="1.8" fill="#000"/><rect x="11.5" y="1.5" width="1" height="1" fill="#fff"/></svg></div></div>
<div id="layers" class="a">
<div class="a" style="left:0;top:0;width:298px;height:22px;background:linear-gradient(#efefef,#d9d9d9)"></div>
<div class="a" style="left:0;top:21.5px;width:298px;height:1.5px;background:#c6c6c6"></div>
<svg class="a" style="left:0;top:0" width="40" height="22"><circle cx="8" cy="10" r="7" fill="#6d6d6d"/><path d="M5.2,7.2L10.8,12.8M10.8,7.2L5.2,12.8" stroke="#f4f4f4" stroke-width="1.8"/><circle cx="26" cy="10" r="7" fill="#6d6d6d"/><rect x="24.2" y="6.6" width="5.6" height="4.4" fill="none" stroke="#f0f0f0" stroke-width="1.1"/><rect x="22" y="9" width="5.6" height="4.4" fill="#6d6d6d" stroke="#f0f0f0" stroke-width="1.1"/></svg>
<span class="t" style="left:128.5px;top:5px;font-size:11.7px;color:#262626">Lista de capas</span>
<div class="a" style="left:0px;top:22px;width:60px;height:27px;background:linear-gradient(#f8f8f8,#ebebeb);border:1.5px solid #a9a9a9"><svg class="a" style="left:-1.5px;top:-1.5px" width="60" height="27"><g transform="translate(29.5,13.2)"><path d="M-7.6,0.8C-5,-7.6 5,-7.6 7.6,0.8C5,7 -5,7 -7.6,0.8Z" fill="#000"/><path d="M-5.4,-0.6C-3.8,5.6 3.8,5.6 5.4,-0.6C3.5,-2 -3.5,-2 -5.4,-0.6Z" fill="#fff"/><circle cx="0.1" cy="-0.4" r="2.7" fill="#000"/><circle cx="-0.7" cy="-1.3" r="0.7" fill="#999"/></g></svg></div>
<div class="a" style="left:59px;top:22px;width:60px;height:27px;background:linear-gradient(#f8f8f8,#ebebeb);border:1.5px solid #a9a9a9"><svg class="a" style="left:-1.5px;top:-1.5px" width="60" height="27"><g transform="translate(29.5,13.2)" opacity="0.33"><path d="M-7.6,0.8C-5,-7.6 5,-7.6 7.6,0.8C5,7 -5,7 -7.6,0.8Z" fill="#000"/><path d="M-5.4,-0.6C-3.8,5.6 3.8,5.6 5.4,-0.6C3.5,-2 -3.5,-2 -5.4,-0.6Z" fill="#fff"/><circle cx="0.1" cy="-0.4" r="2.7" fill="#000"/><circle cx="-0.7" cy="-1.3" r="0.7" fill="#999"/></g></svg></div>
<div class="a" style="left:119px;top:22px;width:60px;height:27px;background:linear-gradient(#f8f8f8,#ebebeb);border:1.5px solid #a9a9a9"><svg class="a" style="left:-1.5px;top:-1.5px" width="60" height="27"><path d="M27.9,6.7H31.1V11.2H35.6V14.4H31.1V18.9H27.9V14.4H23.4V11.2H27.9Z" fill="#f00" stroke="#300" stroke-width="0.6"/></svg></div>
<div class="a" style="left:179px;top:22px;width:60px;height:27px;background:linear-gradient(#f8f8f8,#ebebeb);border:1.5px solid #a9a9a9"><svg class="a" style="left:-1.5px;top:-1.5px" width="60" height="27"><rect x="23.2" y="11" width="12.2" height="3.8" fill="#f00" stroke="#400" stroke-width="0.6"/></svg></div>
<div class="a" style="left:239px;top:22px;width:59.5px;height:27px;background:linear-gradient(#f8f8f8,#ebebeb);border:1.5px solid #a9a9a9"><svg class="a" style="left:-1.5px;top:-1.5px" width="60" height="27"><g transform="translate(29.5,12.8) rotate(-45)"><path d="M-10,0L-6.5,-2H7.5V2H-6.5Z" fill="#e8b040" stroke="#8a5a10" stroke-width="0.6"/><path d="M7.5,-2H10Q11,0 10,2H7.5Z" fill="#e02020"/><path d="M-10,0L-8.3,-1V1Z" fill="#333"/></g></svg></div>
<div class="a" style="left:5px;top:55px;width:16.5px;height:9px;background:#fff;border:1.2px solid #000"></div>
<span class="t" style="left:27px;top:52.5px;font-size:13px;color:#000">0</span>
<svg class="a" style="left:250px;top:48.8px" width="48" height="20"><g transform="translate(17,10)"><path d="M-7.6,0.8C-5,-7.6 5,-7.6 7.6,0.8C5,7 -5,7 -7.6,0.8Z" fill="#000"/><path d="M-5.4,-0.6C-3.8,5.6 3.8,5.6 5.4,-0.6C3.5,-2 -3.5,-2 -5.4,-0.6Z" fill="#fff"/><circle cx="0.1" cy="-0.4" r="2.7" fill="#000"/><circle cx="-0.7" cy="-1.3" r="0.7" fill="#999"/></g><g transform="translate(39,9.8)"><path d="M-2.8,-1V-3.3A2.8,2.8 0 0 1 2.8,-3.3V-1" fill="none" stroke="#b6b6b6" stroke-width="1.3"/><rect x="-4.9" y="-0.9" width="9.8" height="8" rx="0.8" fill="#b6b6b6"/></g></svg>
<div class="a" style="left:5px;top:75px;width:16.5px;height:9px;background:#f00;border:1.2px solid #000"></div>
<span class="t" style="left:27px;top:72.5px;font-size:13px;color:#000">Centro</span>
<svg class="a" style="left:250px;top:68.8px" width="48" height="20"><g transform="translate(17,10)"><path d="M-7.6,0.8C-5,-7.6 5,-7.6 7.6,0.8C5,7 -5,7 -7.6,0.8Z" fill="#000"/><path d="M-5.4,-0.6C-3.8,5.6 3.8,5.6 5.4,-0.6C3.5,-2 -3.5,-2 -5.4,-0.6Z" fill="#fff"/><circle cx="0.1" cy="-0.4" r="2.7" fill="#000"/><circle cx="-0.7" cy="-1.3" r="0.7" fill="#999"/></g><g transform="translate(39,9.8)"><path d="M-2.8,-1V-3.3A2.8,2.8 0 0 1 2.8,-3.3V-1" fill="none" stroke="#b6b6b6" stroke-width="1.3"/><rect x="-4.9" y="-0.9" width="9.8" height="8" rx="0.8" fill="#b6b6b6"/></g></svg>
<div class="a" style="left:5px;top:95px;width:16.5px;height:9px;background:#000;border:1.2px solid #000"></div>
<span class="t" style="left:27px;top:92.5px;font-size:13px;color:#000">Invisible</span>
<svg class="a" style="left:250px;top:88.8px" width="48" height="20"><g transform="translate(17,10)"><path d="M-7.6,0.8C-5,-7.6 5,-7.6 7.6,0.8C5,7 -5,7 -7.6,0.8Z" fill="#000"/><path d="M-5.4,-0.6C-3.8,5.6 3.8,5.6 5.4,-0.6C3.5,-2 -3.5,-2 -5.4,-0.6Z" fill="#fff"/><circle cx="0.1" cy="-0.4" r="2.7" fill="#000"/><circle cx="-0.7" cy="-1.3" r="0.7" fill="#999"/></g><g transform="translate(39,9.8)"><path d="M-2.8,-1V-3.3A2.8,2.8 0 0 1 2.8,-3.3V-1" fill="none" stroke="#b6b6b6" stroke-width="1.3"/><rect x="-4.9" y="-0.9" width="9.8" height="8" rx="0.8" fill="#b6b6b6"/></g></svg>
<div class="a" style="left:5px;top:115px;width:16.5px;height:9px;background:#000;border:1.2px solid #000"></div>
<span class="t" style="left:27px;top:112.5px;font-size:13px;color:#000">Visible</span>
<svg class="a" style="left:250px;top:108.8px" width="48" height="20"><g transform="translate(17,10)"><path d="M-7.6,0.8C-5,-7.6 5,-7.6 7.6,0.8C5,7 -5,7 -7.6,0.8Z" fill="#000"/><path d="M-5.4,-0.6C-3.8,5.6 3.8,5.6 5.4,-0.6C3.5,-2 -3.5,-2 -5.4,-0.6Z" fill="#fff"/><circle cx="0.1" cy="-0.4" r="2.7" fill="#000"/><circle cx="-0.7" cy="-1.3" r="0.7" fill="#999"/></g><g transform="translate(39,9.8)"><path d="M-2.8,-1V-3.3A2.8,2.8 0 0 1 2.8,-3.3V-1" fill="none" stroke="#b6b6b6" stroke-width="1.3"/><rect x="-4.9" y="-0.9" width="9.8" height="8" rx="0.8" fill="#b6b6b6"/></g></svg>
<svg class="a" style="left:236px;top:90px" width="20" height="20"><g transform="translate(9.5,10) rotate(-45)"><path d="M-10,0L-6.5,-1.8H7.5V1.8H-6.5Z" fill="#e8b040" stroke="#8a5a10" stroke-width="0.6"/><path d="M7.5,-1.8H10Q11,0 10,1.8H7.5Z" fill="#e02020"/><path d="M-10,0L-8.3,-0.9V0.9Z" fill="#333"/></g></svg>
</div>
<div id="dock" class="a">
<div class="a" style="left:8px;top:8px;width:30px;height:2px;background:repeating-linear-gradient(90deg,#9a9a9a 0 2px,transparent 2px 6px)"></div>
<div class="a" style="left:1.5px;top:12px;width:41.5px;height:42.6px;border-radius:7px;background:#b9b9b9"></div>
<div class="a" style="left:0;top:153px;width:45px;height:1px;background:repeating-linear-gradient(90deg,#8a8a8a 0 1px,transparent 1px 3px)"></div>
<div class="a" style="left:0;top:301px;width:45px;height:1px;background:repeating-linear-gradient(90deg,#8a8a8a 0 1px,transparent 1px 3px)"></div>
<div class="a" style="left:1.5px;top:309px;width:41.5px;height:42.8px;border-radius:7px;background:#b9b9b9"></div>
<svg class="a" style="left:8px;top:19.5px" width="28" height="28"><rect x="0.6" y="0.6" width="26.8" height="26.8" fill="#fff" stroke="#222" stroke-width="1.2"/><rect x="0" y="0" width="28" height="3.6" fill="#000"/><rect x="1.6" y="0.9" width="3" height="2.4" fill="#fff"/><path d="M7,13.5L13.5,10V20L7,23.5Z" fill="#b8b8b8" stroke="#444" stroke-width="0.8"/><path d="M10,12L16.5,8.5V18.5L10,22Z" fill="#d8d8d8" stroke="#444" stroke-width="0.8"/><path d="M13.5,10.5L21,6.5V17L13.5,21Z" fill="#fff" stroke="#444" stroke-width="0.8"/><path d="M15,19L19.5,11.5" stroke="#e33" stroke-width="0.8"/><path d="M16,17.5L19,17L18.5,13.5" stroke="#e33" stroke-width="0.6" fill="none"/></svg>
<svg class="a" style="left:8px;top:66.3px" width="28" height="28"><rect x="0.6" y="0.6" width="26.8" height="26.8" fill="#fff" stroke="#222" stroke-width="1.2"/><rect x="0" y="0" width="28" height="3.6" fill="#000"/><rect x="1.6" y="0.9" width="3" height="2.4" fill="#fff"/><rect x="7" y="8.5" width="11" height="8.5" fill="#f3ecc8" stroke="#555" stroke-width="0.7"/><circle cx="16.5" cy="16.5" r="4.8" fill="#f3ecc8" fill-opacity="0.9" stroke="#555" stroke-width="0.7"/></svg>
<svg class="a" style="left:8px;top:112.4px" width="28" height="28"><rect x="0.6" y="0.6" width="26.8" height="26.8" fill="#fff" stroke="#222" stroke-width="1.2"/><rect x="0" y="0" width="28" height="3.6" fill="#000"/><rect x="1.6" y="0.9" width="3" height="2.4" fill="#fff"/><rect x="6" y="8.6" width="16" height="10.5" rx="2" fill="#f0f0f4" stroke="#a8b8d8" stroke-width="0.7"/></svg>
<svg class="a" style="left:8px;top:168px" width="28" height="28"><rect x="0.6" y="0.6" width="26.8" height="26.8" fill="#fff" stroke="#222" stroke-width="1.2"/><rect x="0" y="0" width="28" height="3.6" fill="#000"/><rect x="1.6" y="0.9" width="3" height="2.4" fill="#fff"/><rect x="3" y="7.5" width="4" height="3" fill="#000"/><rect x="9" y="7.5" width="15" height="3" fill="#fff" stroke="#333" stroke-width="0.6"/><rect x="3" y="12.8" width="4" height="3" fill="#000"/><rect x="9" y="12.8" width="15" height="3" fill="#fff" stroke="#333" stroke-width="0.6"/><rect x="3" y="18" width="4" height="3" fill="#000"/><rect x="9" y="18" width="15" height="3" fill="#fff" stroke="#333" stroke-width="0.6"/></svg>
<svg class="a" style="left:8px;top:214px" width="28" height="28"><rect x="0.6" y="0.6" width="26.8" height="26.8" fill="#fff" stroke="#222" stroke-width="1.2"/><rect x="0" y="0" width="28" height="3.6" fill="#000"/><rect x="1.6" y="0.9" width="3" height="2.4" fill="#fff"/><path d="M6,8.5H22L16,15V21.5L12,19.5V15Z" fill="#d0d0d0" stroke="#555" stroke-width="0.7"/><ellipse cx="14" cy="8.8" rx="8" ry="1.5" fill="#b0b0b0" stroke="#555" stroke-width="0.6"/></svg>
<svg class="a" style="left:8px;top:259.8px" width="28" height="28"><rect x="0.6" y="0.6" width="26.8" height="26.8" fill="#fff" stroke="#222" stroke-width="1.2"/><rect x="0" y="0" width="28" height="3.6" fill="#000"/><rect x="1.6" y="0.9" width="3" height="2.4" fill="#fff"/><path d="M7,7V22L11,19.5V10Z" fill="#fff" stroke="#333" stroke-width="0.8"/><rect x="11" y="10" width="11" height="9.5" rx="1" fill="#c8c8c8" stroke="#333" stroke-width="0.7"/><path d="M4,14.8H25" stroke="#f07070" stroke-width="0.6" stroke-dasharray="1.5 1"/></svg>
<svg class="a" style="left:8px;top:315.8px" width="28" height="28"><rect x="0.6" y="0.6" width="26.8" height="26.8" fill="#fff" stroke="#222" stroke-width="1.2"/><rect x="0" y="0" width="28" height="3.6" fill="#000"/><rect x="1.6" y="0.9" width="3" height="2.4" fill="#fff"/><path d="M3.5,7h8M3.5,9.5h7M3.5,12h8M3.5,14.5h8.5" stroke="#777" stroke-width="0.7"/><path d="M1,22H27" stroke="#333" stroke-width="0.6"/><path d="M3,24h2M9,24h13" stroke="#333" stroke-width="0.9"/></svg>
<svg class="a" style="left:8px;top:362.6px" width="28" height="28"><rect x="0.6" y="0.6" width="26.8" height="26.8" fill="#fff" stroke="#222" stroke-width="1.2"/><rect x="0" y="0" width="28" height="3.6" fill="#000"/><rect x="1.6" y="0.9" width="3" height="2.4" fill="#fff"/><rect x="8" y="6.5" width="12" height="16" rx="1" fill="#c98820" stroke="#8a5a10" stroke-width="0.6"/><rect x="9.5" y="8.5" width="9" height="13" fill="#f8f8f8"/><rect x="11" y="5.5" width="6" height="3" fill="#999"/><path d="M11,12h6M11,14h6M11,16h5" stroke="#bbb" stroke-width="0.6"/></svg>
</div>
<div id="status" class="a"><span class="t" style="left:2px;top:9px">49.8889,90.1111</span><span class="t" style="left:2px;top:29px">@49.8889,90.1111</span><div class="a" style="left:253.5px;top:4px;width:1px;height:40px;background:#6a6a6a"></div><div class="a" style="left:254.5px;top:4px;width:1px;height:40px;background:#f4f4f4"></div><span class="t" style="left:256px;top:9px">102.9996&lt;61°</span><span class="t" style="left:256px;top:29px">@102.9996&lt;61°</span><div class="a" style="left:506.4px;top:20.9px;width:6px;height:6px;border-radius:3px;background:#c6c6c6"></div><span class="t" style="left:569px;top:17.8px;font-size:10.6px;letter-spacing:-0.12px">Seleccionar entidad o región</span><svg class="a" style="left:716px;top:7px" width="20" height="32"><path d="M1.2,9.5Q1.2,1 9.7,1Q18.2,1 18.2,9.5V21.5Q18.2,30.5 9.7,30.5Q1.2,30.5 1.2,21.5Z" fill="#fff" stroke="#333" stroke-width="0.9"/><path d="M1.2,14.5Q9.7,11.5 18.2,14.5" fill="none" stroke="#333" stroke-width="0.9"/><path d="M9.7,1V12.5" stroke="#333" stroke-width="0.8"/><rect x="8.2" y="3.5" width="3" height="6" rx="1.5" fill="#fff" stroke="#333" stroke-width="0.8"/></svg><div class="a" style="left:940.2px;top:20.9px;width:6px;height:6px;border-radius:3px;background:#c6c6c6"></div><span class="t" style="left:949px;top:17.5px;font-size:10.5px;letter-spacing:-0.1px">No hay entidades seleccionadas.</span><div class="a" style="left:1269.5px;top:20.9px;width:6px;height:6px;border-radius:3px;background:#c6c6c6"></div></div>

</body></html>
